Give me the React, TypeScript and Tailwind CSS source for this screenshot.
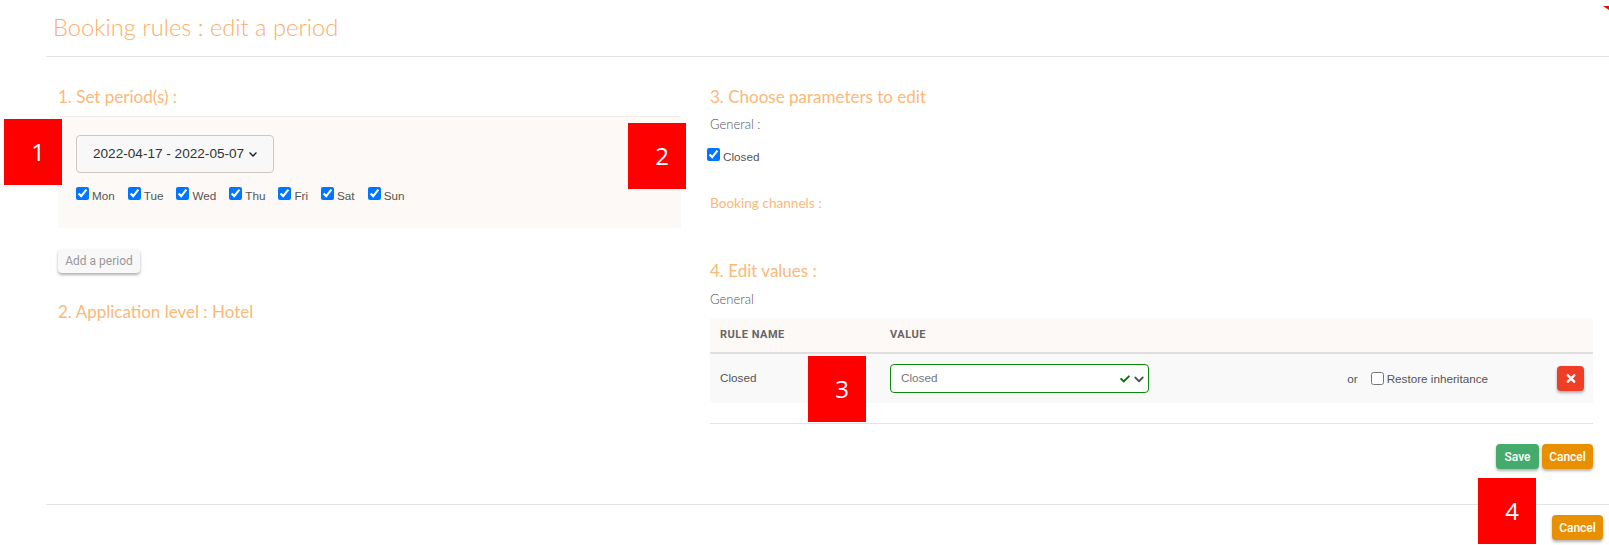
import { FaCheck, FaChevronDown, FaTimes } from "react-icons/fa";

const days = ["Mon", "Tue", "Wed", "Thu", "Fri", "Sat", "Sun"];

function Marker({ n, className }: { n: string; className: string }) {
  return (
    <div className={`absolute flex h-[66px] w-[58px] items-center justify-center bg-[#ff0000] pl-[10px] font-['Open_Sans',sans-serif] text-[24px] text-white ${className}`}>
      {n}
    </div>
  );
}

function Heading({ children, className = "" }: { children: React.ReactNode; className?: string }) {
  return <h3 className={`font-['Lato',sans-serif] text-[17px] leading-[20px] text-[#fbb878] ${className}`}>{children}</h3>;
}

function CancelButton() {
  return (
    <button className="h-[25px] w-[51px] rounded-[4px] bg-[#e99000] font-['Roboto',sans-serif] text-[12px] font-medium text-white shadow-[0_2px_3px_rgba(0,0,0,0.3)]">
      Cancel
    </button>
  );
}

export default function App() {
  return (
    <div className="relative h-[545px] w-[1609px] overflow-hidden bg-white font-['Liberation_Sans',sans-serif] text-[11.7px] text-[#555]">
      <div className="ml-[46px] flex h-[57px] items-start border-b border-[#e4e4e4] pt-[11px] pl-[7px]">
        <h1 className="font-['Lato',sans-serif] text-[23.7px] leading-[32px] font-light text-[#fbae68]">Booking rules : edit a period</h1>
      </div>

      <div className="flex h-[447px]">
        <div className="ml-[58px] w-[623px] pt-[30px]">
          <Heading>1. Set period(s) :</Heading>
          <div className="mt-[9px] h-[112px] border-t border-[#f0ece8] bg-[#fdf9f6] pt-[18px] pl-[18px]">
            <button className="flex h-[38px] w-[198px] items-center gap-[4px] rounded-[4px] border border-[#ccc8c4] bg-[#f8f8f8] pl-[16px] text-[13.6px] text-[#333]">
              2022-04-17 - 2022-05-07
              <FaChevronDown className="h-[9px] w-[10px] text-[#222]" />
            </button>
            <div className="mt-[14px] flex gap-[13px]">
              {days.map((d) => (
                <label key={d} className="flex items-start gap-[3px]">
                  <input type="checkbox" defaultChecked readOnly />
                  <span className="mt-[2px] leading-[14px]">{d}</span>
                </label>
              ))}
            </div>
          </div>
          <button className="mt-[21px] block h-[24px] w-[82px] rounded-[4px] bg-[#f8f8f8] font-['Roboto',sans-serif] text-[12px] text-[#999] shadow-[0_2px_3px_rgba(0,0,0,0.3)]">
            Add a period
          </button>
          <Heading className="mt-[29px]">2. Application level : Hotel</Heading>
        </div>

        <div className="ml-[29px] w-[883px] pt-[30px]">
          <Heading>3. Choose parameters to edit</Heading>
          <p className="mt-[9px] font-['Lato',sans-serif] text-[13px] leading-[16px] font-light text-[#555]">General :</p>
          <label className="mt-[16px] -ml-[3px] flex items-start gap-[3px]">
            <input type="checkbox" defaultChecked readOnly />
            <span className="mt-[2px] leading-[14px]">Closed</span>
          </label>
          <p className="mt-[30px] font-['Lato',sans-serif] text-[13.6px] leading-[18px] text-[#fbb878]">Booking channels :</p>
          <Heading className="mt-[49px]">4. Edit values :</Heading>
          <p className="mt-[10px] font-['Lato',sans-serif] text-[13px] leading-[16px] font-light text-[#555]">General</p>

          <div className="mt-[11px] flex h-[36px] items-center border-b-2 border-[#dedede] bg-[#fdf9f6] font-['Roboto',sans-serif] text-[11px] font-bold tracking-[0.5px] text-[#666]">
            <div className="w-[180px] pl-[10px]">RULE NAME</div>
            <div>VALUE</div>
          </div>
          <div className="flex h-[49px] items-center bg-[#f9f9f9] pr-[9px]">
            <div className="w-[180px] pb-[2px] pl-[10px]">Closed</div>
            <div className="flex h-[29px] w-[259px] items-center justify-between rounded-[4px] border border-[#0c8a0c] bg-white pr-[3px] pl-[10px] text-[#777]">
              <span className="pb-[1px]">Closed</span>
              <span className="flex items-center gap-[2px]">
                <FaCheck className="h-[10px] w-[12px] text-[#0a7a0a]" />
                <svg viewBox="0 0 16 16" className="h-[12px] w-[12px]" fill="none" stroke="#555" strokeWidth="2.4" strokeLinecap="round" strokeLinejoin="round">
                  <path d="M3 6l5 5 5-5" />
                </svg>
              </span>
            </div>
            <div className="ml-auto flex items-center">
              <span className="mr-[13px]">or</span>
              <label className="flex items-center gap-[3px]">
                <input type="checkbox" readOnly />
                <span>Restore inheritance</span>
              </label>
              <button className="ml-[69px] flex h-[25px] w-[27px] items-center justify-center rounded-[4px] bg-[#f03d25] text-white shadow-[0_2px_3px_rgba(0,0,0,0.3)]">
                <FaTimes className="h-[13px] w-[12px]" />
              </button>
            </div>
          </div>
          <div className="mt-[20px] border-t border-[#e2e2e2]" />
          <div className="mt-[20px] flex justify-end gap-[3px]">
            <button className="h-[25px] w-[43px] rounded-[4px] bg-[#44ab6c] font-['Roboto',sans-serif] text-[12px] font-medium text-white shadow-[0_2px_3px_rgba(0,0,0,0.3)]">
              Save
            </button>
            <CancelButton />
          </div>
        </div>
      </div>

      <div className="ml-[46px] flex h-[41px] justify-end border-t border-[#e4e4e4] pt-[10px] pr-[6px]">
        <CancelButton />
      </div>

      <Marker n="1" className="top-[119px] left-[4px]" />
      <Marker n="2" className="top-[123px] left-[628px]" />
      <Marker n="3" className="top-[356px] left-[808px]" />
      <Marker n="4" className="top-[478px] left-[1478px]" />
      <svg viewBox="0 0 6 4" className="absolute top-[6px] left-[1603px] h-[4px] w-[6px]">
        <path d="M0 0H6V4Z" fill="#ff0000" />
      </svg>
    </div>
  );
}
